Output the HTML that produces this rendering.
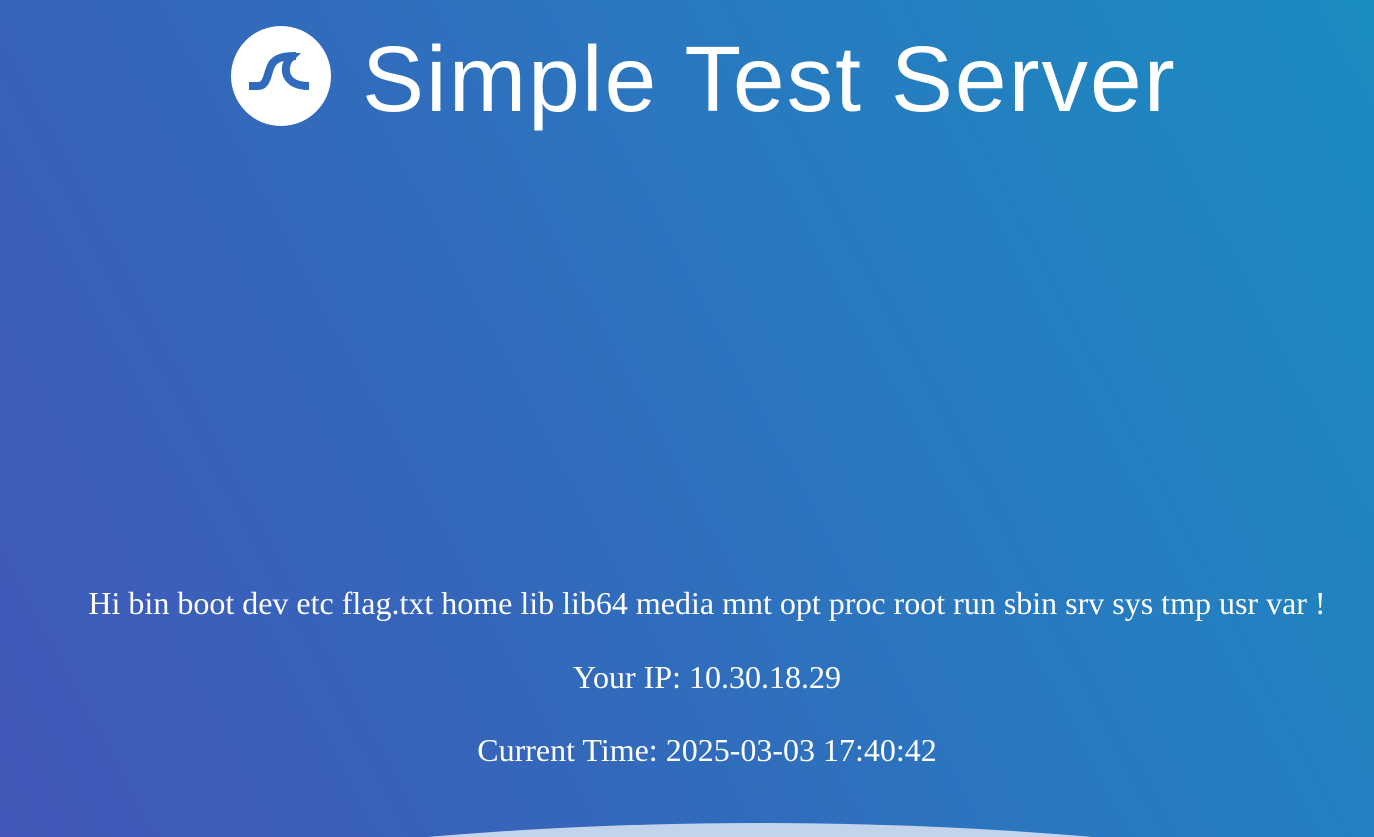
<!DOCTYPE html>
<html><head><style>
html,body{margin:0;padding:0;width:1374px;height:837px;overflow:hidden}
body{background:linear-gradient(62deg,#4257b9 0%,#3368bb 35%,#2a78c0 60%,#1a8cc0 100%);position:relative;font-family:"Liberation Serif",serif;color:#fff}
.clip{position:absolute;left:0;top:0;width:1374px;height:837px;overflow:hidden}
.title{position:absolute;left:362px;top:19px;font-family:"Liberation Sans",sans-serif;font-size:93px;font-weight:normal;letter-spacing:2px;white-space:nowrap;line-height:120px}
.logo{position:absolute;left:231px;top:26px}
.t{position:absolute;left:40px;width:1334px;text-align:center;font-size:32px;white-space:nowrap}
.ell{position:absolute;left:-340px;top:823px;width:2200px;height:600px;border-radius:50%;background:#c3d3ec}
</style></head><body><div class="clip">
<svg class="logo" width="100" height="100" viewBox="231 26 100 100">
<circle cx="281" cy="76" r="50" fill="#fff"/>
<g fill="none" stroke="#2f6abd" stroke-width="8">
<path d="M249 86 H258 C268 86 267 72 272 64 C276 58 283 56 296 56"/>
<path d="M290 58 C282 68 284 86 309 86"/>
</g>
<path d="M284 53 L301 53 L292 62 Z" fill="#2f6abd"/>
</svg>
<div class="title">Simple Test Server</div>
<div class="t" style="top:585px">Hi bin boot dev etc flag.txt home lib lib64 media mnt opt proc root run sbin srv sys tmp usr var !</div>
<div class="t" style="top:659px">Your IP: 10.30.18.29</div>
<div class="t" style="top:732px">Current Time: 2025-03-03 17:40:42</div>
<div class="ell"></div>
</div></body></html>
